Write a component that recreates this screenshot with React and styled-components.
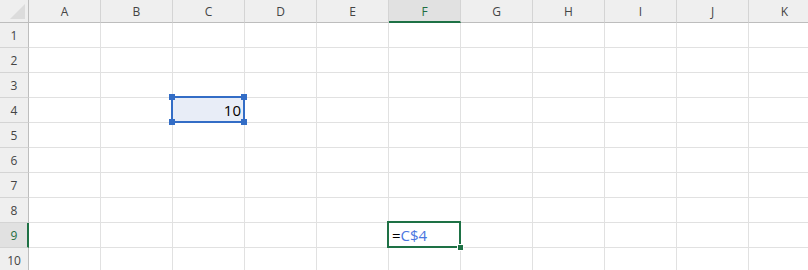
import React from "react";
import styled, { createGlobalStyle, css } from "styled-components";

const Global = createGlobalStyle`
  html, body { margin: 0; padding: 0; background: #ffffff; overflow: hidden; }
  body { font-family: "Open Sans", "Noto Sans", "Liberation Sans", sans-serif; }
`;

const COLS = ["A", "B", "C", "D", "E", "F", "G", "H", "I", "J", "K"];
const ROWS = [1, 2, 3, 4, 5, 6, 7, 8, 9, 10];
const ACTIVE_COL = "F";
const ACTIVE_ROW = 9;

const Sheet = styled.div`
  display: grid;
  grid-template-columns: 29px repeat(11, 72px);
  grid-template-rows: 23px repeat(10, 25px);
  width: 808px;
  height: 270px;
  overflow: hidden;
`;

const Corner = styled.div`
  position: relative;
  background: #efefef;
  border-right: 1px solid #bdbdbd;
  border-bottom: 1px solid #bdbdbd;
  box-sizing: border-box;
  &::after {
    content: "";
    position: absolute;
    right: 3px;
    bottom: 3px;
    width: 0;
    height: 0;
    border-left: 15px solid transparent;
    border-bottom: 15px solid #dcdcdc;
  }
`;

const ColHead = styled.div`
  box-sizing: border-box;
  background: ${(p) => (p.$active ? "#e1e1e1" : "#efefef")};
  border-right: 1px solid #d4d4d4;
  border-bottom: ${(p) => (p.$active ? "2px solid #1e7145" : "1px solid #bdbdbd")};
  color: ${(p) => (p.$active ? "#1e6e41" : "#444444")};
  font-size: 12px;
  display: flex;
  align-items: center;
  justify-content: center;
  padding-top: ${(p) => (p.$active ? "1px" : "0")};
`;

const RowHead = styled.div`
  box-sizing: border-box;
  background: ${(p) => (p.$active ? "#e1e1e1" : "#efefef")};
  border-bottom: 1px solid #d4d4d4;
  border-right: ${(p) => (p.$active ? "2px solid #1e7145" : "1px solid #bdbdbd")};
  color: ${(p) => (p.$active ? "#1e6e41" : "#444444")};
  font-size: 12px;
  display: flex;
  align-items: center;
  justify-content: center;
  padding-left: ${(p) => (p.$active ? "1px" : "0")};
`;

const Cell = styled.div`
  position: relative;
  box-sizing: border-box;
  border-right: 1px solid #e1e1e1;
  border-bottom: 1px solid #e1e1e1;
  background: ${(p) => (p.$range ? "#e8edf7" : "#ffffff")};
  font-size: 15px;
  color: #000;
  display: flex;
  align-items: center;
  justify-content: ${(p) => (p.$align === "right" ? "flex-end" : "flex-start")};
  padding: 0 3px;
  ${(p) =>
    p.$range &&
    css`
      &::after {
        content: "";
        position: absolute;
        left: -2px;
        top: -2px;
        right: -1px;
        bottom: -1px;
        border: 2px solid #336dc6;
        pointer-events: none;
      }
    `}
  ${(p) =>
    p.$active &&
    css`
      &::after {
        content: "";
        position: absolute;
        left: -2px;
        top: -2px;
        right: -1px;
        bottom: -1px;
        border: 2px solid #1e7145;
        pointer-events: none;
      }
    `}
`;

const Handle = styled.span`
  position: absolute;
  width: 6px;
  height: 6px;
  background: #336dc6;
  z-index: 2;
  ${(p) => (p.$x === "l" ? "left: -4px;" : "right: -3px;")}
  ${(p) => (p.$y === "t" ? "top: -4px;" : "bottom: -3px;")}
`;

const FillHandle = styled.span`
  position: absolute;
  right: -4px;
  bottom: -4px;
  width: 5px;
  height: 5px;
  background: #1e7145;
  border: 1px solid #ffffff;
  z-index: 2;
`;

const Eq = styled.span`
  color: #000;
`;

const Ref = styled.span`
  color: #4a76e0;
`;

export default function App() {
  return (
    <>
      <Global />
      <Sheet>
        <Corner />
        {COLS.map((c) => (
          <ColHead key={c} $active={c === ACTIVE_COL}>
            {c}
          </ColHead>
        ))}
        {ROWS.map((r) => (
          <React.Fragment key={r}>
            <RowHead $active={r === ACTIVE_ROW}>{r}</RowHead>
            {COLS.map((c) => {
              if (c === "C" && r === 4) {
                return (
                  <Cell key={c} $range $align="right">
                    10
                    <Handle $x="l" $y="t" />
                    <Handle $x="r" $y="t" />
                    <Handle $x="l" $y="b" />
                    <Handle $x="r" $y="b" />
                  </Cell>
                );
              }
              if (c === ACTIVE_COL && r === ACTIVE_ROW) {
                return (
                  <Cell key={c} $active>
                    <Eq>=</Eq>
                    <Ref>C$4</Ref>
                    <FillHandle />
                  </Cell>
                );
              }
              return <Cell key={c} />;
            })}
          </React.Fragment>
        ))}
      </Sheet>
    </>
  );
}
